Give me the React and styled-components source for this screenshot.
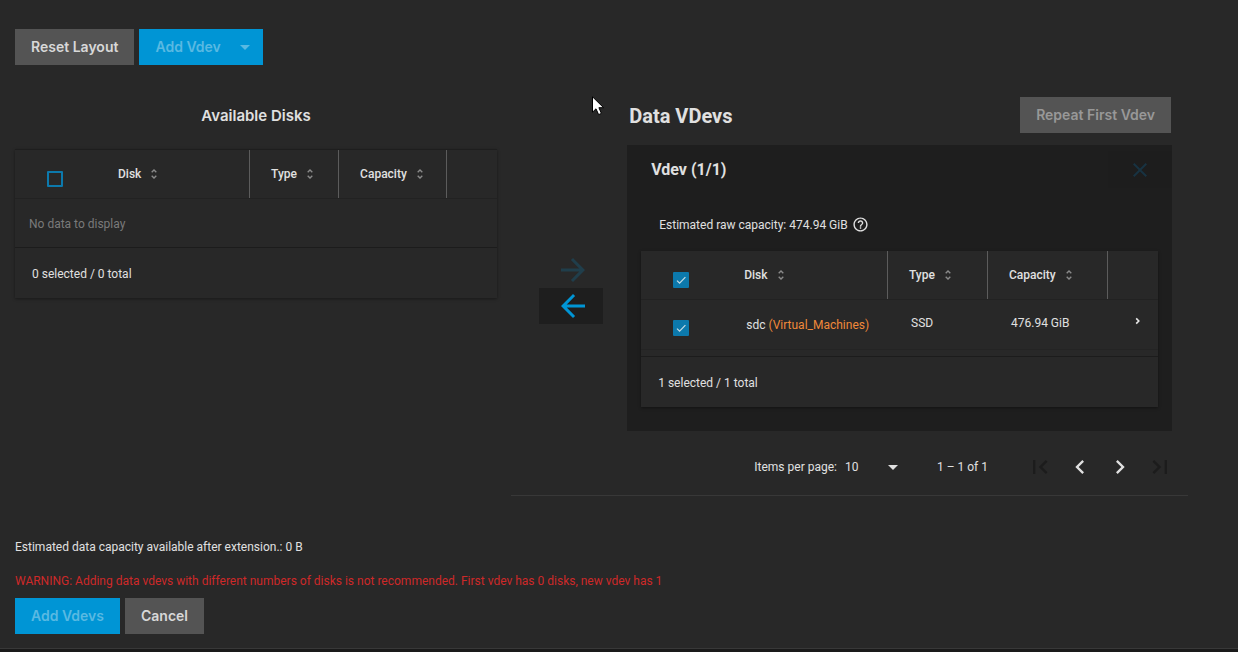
import { useState } from "react";
import styled, { createGlobalStyle, css } from "styled-components";
import {
  MdArrowBack,
  MdArrowDropDown,
  MdArrowForward,
  MdChevronLeft,
  MdChevronRight,
  MdClose,
  MdFirstPage,
  MdHelpOutline,
  MdLastPage,
} from "react-icons/md";

const SortIcon = () => (
  <SortSvg width="6" height="10" viewBox="0 0 6 10" aria-hidden="true">
    <path d="M0.7 3.2L3 1L5.3 3.2M0.7 6.8L3 9L5.3 6.8" />
  </SortSvg>
);

const Checkbox = ({ label, checked, onChange }) => (
  <CheckboxBlock>
    <CheckboxInput
      type="checkbox"
      aria-label={label}
      checked={checked}
      onChange={(e) => onChange(e.target.checked)}
    />
    {checked && (
      <CheckMark viewBox="0 0 16 16" aria-hidden="true">
        <path d="M4 8.6L6.6 11.2L12.4 5.2" />
      </CheckMark>
    )}
  </CheckboxBlock>
);

const DiskTable = ({ disks, typeWidth, capacityWidth, topLine }) => {
  const [selected, setSelected] = useState(disks.map((disk) => disk.name));
  const allSelected = disks.length > 0 && selected.length === disks.length;

  const toggleAll = (checked) => {
    setSelected(checked ? disks.map((disk) => disk.name) : []);
  };

  const toggleDisk = (name, checked) => {
    setSelected((selected) =>
      checked ? [...selected, name] : selected.filter((item) => item !== name)
    );
  };

  return (
    <TableBlock $topLine={topLine}>
      <Table>
        <colgroup>
          <Col $width={82} />
          <Col />
          <Col $width={typeWidth} />
          <Col $width={capacityWidth} />
          <Col $width={50} />
        </colgroup>
        <thead>
          <tr>
            <CheckHead>
              <Checkbox
                label="Select all disks"
                checked={allSelected}
                onChange={toggleAll}
              />
            </CheckHead>
            {["Disk", "Type", "Capacity"].map((name) => (
              <Head key={name}>
                <HeadInner>
                  <SortButton>
                    {name}
                    <SortIcon />
                  </SortButton>
                  <Divider />
                </HeadInner>
              </Head>
            ))}
            <Head />
          </tr>
        </thead>
        <tbody>
          {disks.length === 0 && (
            <tr>
              <EmptyCell colSpan={5}>No data to display</EmptyCell>
            </tr>
          )}
          {disks.map((disk) => (
            <tr key={disk.name}>
              <CheckCell>
                <Checkbox
                  label={disk.name}
                  checked={selected.includes(disk.name)}
                  onChange={(checked) => toggleDisk(disk.name, checked)}
                />
              </CheckCell>
              <Cell>
                {disk.name} <Pool>({disk.pool})</Pool>
              </Cell>
              <Cell $raised>{disk.type}</Cell>
              <Cell $raised>{disk.capacity}</Cell>
              <ExpandCell>
                <ExpandButton aria-label={`Expand ${disk.name}`}>
                  <svg width="6" height="8" viewBox="0 0 6 8">
                    <path d="M1.2 1.4L3.8 4L1.2 6.6" />
                  </svg>
                </ExpandButton>
              </ExpandCell>
            </tr>
          ))}
        </tbody>
      </Table>
      <TableFooter $spaced={disks.length > 0}>
        {selected.length} selected / {disks.length} total
      </TableFooter>
    </TableBlock>
  );
};

const Paginator = () => (
  <PaginatorBlock>
    <label htmlFor="page-size">Items per page:</label>
    <SelectBlock>
      <PageSelect id="page-size" defaultValue="10">
        <option>10</option>
        <option>20</option>
        <option>50</option>
      </PageSelect>
      <MdArrowDropDown size={24} />
    </SelectBlock>
    <Range>1 – 1 of 1</Range>
    <PageButton aria-label="First page" disabled>
      <MdFirstPage size={28} />
    </PageButton>
    <PageButton aria-label="Previous page">
      <MdChevronLeft size={28} />
    </PageButton>
    <PageButton aria-label="Next page">
      <MdChevronRight size={28} />
    </PageButton>
    <PageButton aria-label="Last page" disabled>
      <MdLastPage size={28} />
    </PageButton>
  </PaginatorBlock>
);

const vdevDisks = [
  {
    name: "sdc",
    pool: "Virtual_Machines",
    type: "SSD",
    capacity: "476.94 GiB",
  },
];

const App = () => {
  return (
    <>
      <GlobalStyle />
      <Page>
        <ButtonRow>
          <Button>Reset Layout</Button>
          <Button $primary $menu disabled>
            Add Vdev
            <MdArrowDropDown size={24} />
          </Button>
        </ButtonRow>

        <Columns>
          <Available>
            <AvailableTitle>Available Disks</AvailableTitle>
            <DiskTable disks={[]} typeWidth={89} capacityWidth={108} topLine />
          </Available>

          <Vdevs>
            <VdevsHeader>
              <VdevsTitle>Data VDevs</VdevsTitle>
              <Button disabled>Repeat First Vdev</Button>
            </VdevsHeader>
            <Arrows>
              <ArrowButton aria-label="Add disks to vdev" disabled>
                <MdArrowForward size={36} />
              </ArrowButton>
              <ArrowButton aria-label="Remove disks from vdev">
                <MdArrowBack size={36} />
              </ArrowButton>
            </Arrows>
            <VdevCard>
              <CardHeader>
                <CardTitle>Vdev (1/1)</CardTitle>
                <CloseButton aria-label="Remove vdev" disabled>
                  <MdClose size={24} />
                </CloseButton>
              </CardHeader>
              <RawCapacity>
                Estimated raw capacity: 474.94 GiB
                <MdHelpOutline size={17} />
              </RawCapacity>
              <CardBody>
                <DiskTable
                  disks={vdevDisks}
                  typeWidth={100}
                  capacityWidth={120}
                />
              </CardBody>
            </VdevCard>
            <Paginator />
          </Vdevs>
        </Columns>

        <Estimate>Estimated data capacity available after extension.: 0 B</Estimate>
        <Warning>
          WARNING: Adding data vdevs with different numbers of disks is not
          recommended. First vdev has 0 disks, new vdev has 1
        </Warning>
        <ButtonRow>
          <Button $primary disabled>
            Add Vdevs
          </Button>
          <Button>Cancel</Button>
        </ButtonRow>
      </Page>
      <Pointer width="13" height="20" viewBox="0 0 13 20" aria-hidden="true">
        <path d="M0.5 0.8V16.2L4 12.8L6.6 18.6L9.4 17.4L6.9 11.7H11.6Z" />
      </Pointer>
    </>
  );
};

const GlobalStyle = createGlobalStyle`
  * {
    box-sizing: border-box;
  }
  body {
    margin: 0;
    background: #1a1a1a;
    color: #e0e0e0;
    font-family: Roboto, "Liberation Sans", sans-serif;
    font-size: 12px;
    line-height: 16px;
  }
  button,
  select {
    font: inherit;
    color: inherit;
    border: none;
    background: none;
    padding: 0;
    cursor: pointer;
  }
  button:disabled {
    cursor: default;
  }
`;

const Page = styled.main`
  padding: 29px 50px 14px 15px;
  background: #282828;
  border-bottom: 1px solid #383838;
`;
const ButtonRow = styled.div`
  display: flex;
  gap: 5px;
`;
const Button = styled.button`
  display: flex;
  align-items: center;
  height: 36px;
  padding: 0 16px;
  background: #545454;
  color: #d8d8d8;
  font-family: Inter, "Liberation Sans", sans-serif;
  font-size: 14px;
  font-weight: 600;
  white-space: nowrap;
  &:disabled {
    color: #989898;
  }
  ${(props) =>
    props.$primary &&
    css`
      background: #0095d5;
      &:disabled {
        color: #59b9e2;
      }
    `}
  ${(props) =>
    props.$menu &&
    css`
      gap: 12px;
      padding-right: 6px;
    `}
`;
const Columns = styled.div`
  display: grid;
  grid-template-columns: 41.1% 57.7%;
  justify-content: space-between;
  margin-top: 32px;
`;
const Available = styled.section`
  display: flex;
  flex-direction: column;
`;
const AvailableTitle = styled.h3`
  margin: 0 0 16px;
  padding-top: 2px;
  font-family: Inter, "Liberation Sans", sans-serif;
  font-size: 15px;
  font-weight: 600;
  line-height: 34px;
  text-align: center;
`;
const Vdevs = styled.section`
  display: grid;
  grid-template-columns: 116px minmax(0, 1fr) 16px;
  border-bottom: 1px solid #383838;
`;
const VdevsHeader = styled.div`
  grid-column: 2;
  display: flex;
  align-items: center;
  justify-content: space-between;
  margin-bottom: 12px;
  padding: 0 1px 0 2px;
`;
const VdevsTitle = styled.h2`
  margin: 0;
  padding-top: 2px;
  font-size: 20px;
  font-weight: 700;
  line-height: 32px;
`;
const Arrows = styled.div`
  grid-column: 1;
  align-self: center;
  padding-left: 28px;
`;
const ArrowButton = styled.button`
  display: flex;
  align-items: center;
  justify-content: center;
  width: 64px;
  height: 36px;
  padding-left: 4px;
  background: #1e1e1e;
  color: #0095d5;
  &:disabled {
    background: none;
    color: #203e4b;
  }
`;
const VdevCard = styled.div`
  grid-column: 2;
  padding: 6px 0 24px;
  background: #1e1e1e;
`;
const CardHeader = styled.div`
  display: flex;
  align-items: center;
  justify-content: space-between;
  padding-left: 24px;
`;
const CardTitle = styled.h3`
  margin: 0;
  font-size: 16px;
  font-weight: 700;
`;
const CloseButton = styled.button`
  display: flex;
  align-items: center;
  justify-content: center;
  width: 64px;
  height: 37px;
  background: #1d1d1d;
  color: #183342;
`;
const RawCapacity = styled.div`
  display: flex;
  align-items: center;
  gap: 4px;
  padding: 28px 32px 18px;
`;
const CardBody = styled.div`
  padding: 0 14px;
`;
const TableBlock = styled.div`
  background: #282828;
  box-shadow: 0 1px 3px rgba(0, 0, 0, 0.4);
  ${(props) =>
    props.$topLine &&
    css`
      border-top: 1px solid #1e1e1e;
    `}
`;
const Table = styled.table`
  width: 100%;
  table-layout: fixed;
  border-collapse: separate;
  border-spacing: 0;
`;
const Col = styled.col`
  width: ${(props) => (props.$width ? `${props.$width}px` : "auto")};
`;
const Head = styled.th`
  height: 49px;
  padding: 0;
  border-bottom: 1px solid #222222;
  font-weight: 500;
  text-align: left;
`;
const CheckHead = styled(Head)`
  padding: 9px 0 0 32px;
`;
const HeadInner = styled.div`
  display: flex;
  align-items: center;
  justify-content: space-between;
  height: 48px;
  padding-left: 21px;
`;
const SortButton = styled.button`
  display: flex;
  align-items: center;
  gap: 10px;
`;
const SortSvg = styled.svg`
  fill: none;
  stroke: #8a8a8a;
  stroke-width: 1.4;
`;
const Divider = styled.span`
  width: 1px;
  height: 48px;
  background: #5c5c5c;
`;
const Cell = styled.td`
  height: 50px;
  padding: 0 0 ${(props) => (props.$raised ? 4 : 0)}px 23px;
  border-bottom: 1px solid #242424;
  white-space: nowrap;
`;
const CheckCell = styled(Cell)`
  padding: 7px 0 0 32px;
`;
const ExpandCell = styled(Cell)`
  padding-bottom: 7px;
`;
const EmptyCell = styled(Cell)`
  height: 48px;
  padding: 2px 0 0 14px;
  border: none;
  color: #7a7a7a;
`;
const Pool = styled.span`
  color: #f0883a;
`;
const ExpandButton = styled.button`
  display: flex;
  padding: 4px;
  svg {
    fill: none;
    stroke: #e8e8e8;
    stroke-width: 1.6;
  }
`;
const TableFooter = styled.div`
  margin-top: ${(props) => (props.$spaced ? 6 : 0)}px;
  padding: 18px 17px 16px;
  border-top: 1px solid #1c1c1c;
`;
const CheckboxBlock = styled.span`
  display: grid;
  width: 16px;
  height: 16px;
`;
const CheckboxInput = styled.input`
  grid-area: 1 / 1;
  width: 16px;
  height: 16px;
  margin: 0;
  appearance: none;
  border: 2px solid #0c79ac;
  border-radius: 1px;
  cursor: pointer;
  &:checked {
    background: #0c79ac;
  }
`;
const CheckMark = styled.svg`
  grid-area: 1 / 1;
  width: 16px;
  height: 16px;
  fill: none;
  stroke: #c5dce6;
  stroke-width: 1.2;
  pointer-events: none;
`;
const PaginatorBlock = styled.div`
  grid-column: 1 / -1;
  display: flex;
  align-items: center;
  justify-content: flex-end;
  margin-top: 8px;
  padding: 8px;
`;
const SelectBlock = styled.div`
  display: grid;
  align-items: center;
  width: 60px;
  margin-left: 8px;
  svg {
    grid-area: 1 / 1;
    justify-self: end;
    pointer-events: none;
  }
`;
const PageSelect = styled.select`
  grid-area: 1 / 1;
  appearance: none;
`;
const Range = styled.div`
  margin: 0 32px;
`;
const PageButton = styled.button`
  display: flex;
  align-items: center;
  justify-content: center;
  width: 40px;
  height: 40px;
  &:disabled {
    color: #1c1c1c;
  }
`;
const Estimate = styled.p`
  margin: 43px 0 18px;
`;
const Warning = styled.p`
  margin: 0 0 9px;
  color: #ce2929;
`;
const Pointer = styled.svg`
  position: absolute;
  top: 96px;
  left: 592px;
  fill: #ffffff;
  stroke: #000000;
  stroke-width: 1;
  pointer-events: none;
`;

export default App;
